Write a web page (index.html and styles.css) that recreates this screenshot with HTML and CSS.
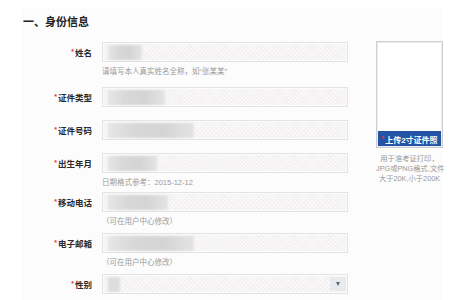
FILE: index.html
```html
<!DOCTYPE html>
<html lang="zh-CN">
<head>
    <meta charset="UTF-8">
    <meta name="viewport" content="width=device-width, initial-scale=1.0">
    <title>身份信息</title>
    <link rel="stylesheet" href="styles.css">
</head>
<body>
    <div class="panel">
        <h2 class="title">一、身份信息</h2>
        <div class="panel-body">
            <!-- Left: form fields -->
            <div class="fields">
                <div class="field gap-lg">
                    <label class="label"><i>*</i>姓名</label>
                    <div class="control">
                        <div class="input"><span class="mask" style="width:34px"></span></div>
                        <p class="hint">请填写本人真实姓名全称，如“张某某”</p>
                    </div>
                </div>
                <div class="field">
                    <label class="label"><i>*</i>证件类型</label>
                    <div class="control">
                        <div class="input"><span class="mask" style="width:57px"></span></div>
                    </div>
                </div>
                <div class="field">
                    <label class="label"><i>*</i>证件号码</label>
                    <div class="control">
                        <div class="input"><span class="mask" style="width:86px"></span></div>
                    </div>
                </div>
                <div class="field gap-xs">
                    <label class="label"><i>*</i>出生年月</label>
                    <div class="control">
                        <div class="input"><span class="mask" style="width:49px"></span></div>
                        <p class="hint">日期格式参考：2015-12-12</p>
                    </div>
                </div>
                <div class="field gap-sm">
                    <label class="label"><i>*</i>移动电话</label>
                    <div class="control">
                        <div class="input"><span class="mask" style="width:60px"></span></div>
                        <p class="hint">（可在用户中心修改）</p>
                    </div>
                </div>
                <div class="field gap-sm">
                    <label class="label"><i>*</i>电子邮箱</label>
                    <div class="control">
                        <div class="input"><span class="mask" style="width:86px"></span></div>
                        <p class="hint">（可在用户中心修改）</p>
                    </div>
                </div>
                <div class="field">
                    <label class="label"><i>*</i>性别</label>
                    <div class="control">
                        <div class="input select">
                            <span class="mask mask-short" style="width:12px"></span>
                            <span class="select-arrow"></span>
                        </div>
                    </div>
                </div>
            </div>

            <!-- Right: photo upload -->
            <div class="photo">
                <div class="photo-frame">
                    <div class="photo-btn"><i>*</i>上传2寸证件照</div>
                </div>
                <p class="photo-note">用于准考证打印，<br>JPG或PNG格式,文件<br>大于20K,小于200K</p>
            </div>
        </div>
    </div>
</body>
</html>
```

FILE: styles.css
```css
body {
    margin: 0;
    background-color: #ffffff;
    font-family: "Liberation Sans", "Noto Sans CJK SC", sans-serif;
    color: #333;
}

.panel {
    margin: 8px 15px 0 23px;
    min-height: 292px;
    background-color: #fcfcfc;
}

.title {
    margin: 0;
    padding-top: 7px;
    font-size: 11px;
    line-height: 14px;
    font-weight: bold;
    color: #222;
}

.panel-body {
    display: flex;
    margin-top: 12px;
}

.fields {
    width: 325px;
    padding-top: 1px;
}

.field {
    display: flex;
    gap: 10px;
    margin-bottom: 12px;
}

.field.gap-lg {
    margin-bottom: 7px;
}

.field.gap-sm {
    margin-bottom: 3px;
}

.field.gap-xs {
    margin-bottom: 1px;
}

.label {
    width: 69px;
    text-align: right;
    font-size: 8.5px;
    line-height: 20px;
    font-weight: bold;
    color: #2a2a2a;
}

.label i,
.photo-btn i {
    font-style: normal;
    color: #e8323c;
    font-size: 7px;
    vertical-align: 2px;
    margin-right: 1px;
}

.control {
    width: 246px;
}

.input {
    box-sizing: border-box;
    height: 20px;
    padding: 2px 5px;
    border: 1px solid #e3e3e3;
    box-shadow: inset 0 0 0 1px #fbfbfb;
    background-color: #faf9f9;
    background-image: repeating-linear-gradient(45deg, #f4f0f0 0 1px, transparent 1px 3px),
        repeating-linear-gradient(-45deg, #f6f3f3 0 1px, transparent 1px 3px);
    display: flex;
    align-items: center;
}

.mask {
    display: block;
    height: 15px;
    background: linear-gradient(90deg, #e6e6e6, #d8d8d8 30%, #d4d4d4 65%, #e4e4e4);
    filter: blur(1px);
}

.mask-short {
    background: #dedede;
}

.select {
    justify-content: space-between;
    padding-right: 1px;
}

.select-arrow {
    width: 16px;
    height: 14px;
    background-color: #e6ebef;
    position: relative;
}

.select-arrow::after {
    content: "";
    position: absolute;
    left: 6px;
    top: 5px;
    border-left: 2.5px solid transparent;
    border-right: 2.5px solid transparent;
    border-top: 4px solid #666;
}

.hint {
    margin: 2px 0 0;
    font-size: 7.5px;
    line-height: 16px;
    color: #9a9a9a;
}

.photo {
    margin-left: 28px;
    width: 67px;
}

.photo-frame {
    box-sizing: border-box;
    height: 107px;
    border: 1px solid #cfcfcf;
    box-shadow: inset 0 0 0 1px #ececec;
    background-color: #ffffff;
    display: flex;
    flex-direction: column;
    justify-content: flex-end;
    padding: 0 1px 1px;
}

.photo-btn {
    height: 15px;
    background-color: #2354a6;
    color: #ffffff;
    font-size: 8px;
    font-weight: bold;
    line-height: 16px;
    text-align: center;
    white-space: nowrap;
}

.photo-note {
    margin: 6px 0 0;
    font-size: 7.3px;
    line-height: 10px;
    color: #999;
    text-align: center;
    white-space: nowrap;
}
```
